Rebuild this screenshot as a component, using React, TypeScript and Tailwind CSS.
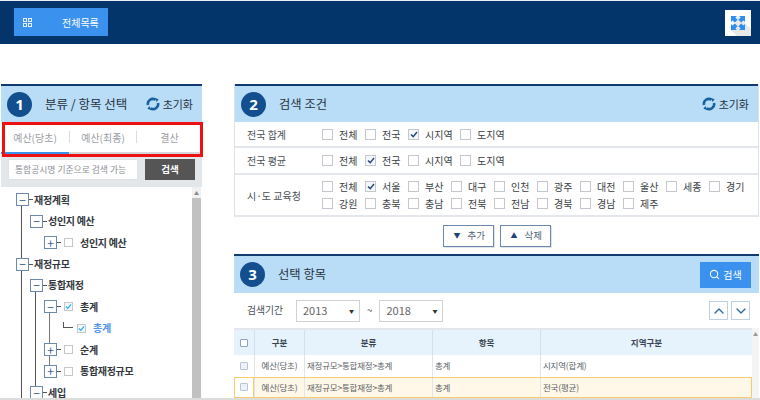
import React from "react";
import { ChevronDown, ChevronUp, Search } from "lucide-react";

const FONT = "[font-family:'Noto_Sans_CJK_KR','Noto_Sans',sans-serif]";

// Numbered circle used by every panel header
const StepBadge = ({ n }: { n: number }) => (
  <span className="flex h-[25px] w-[25px] shrink-0 items-center justify-center rounded-full bg-[#134f8f] text-[15px] font-bold text-white [font-family:'Open_Sans',sans-serif]">
    {n}
  </span>
);

const ResetIcon = () => (
  <svg width="14" height="14" viewBox="0 0 14 14" fill="none">
    <path d="M2 8a5 5 0 0 1 7.6-5.3" stroke="#16609f" strokeWidth="2.6" />
    <path d="M12 6a5 5 0 0 1-7.6 5.3" stroke="#16609f" strokeWidth="2.6" />
    <path d="M9 1 12.6 2.2 10.6 5Z" fill="#16609f" />
    <path d="M5 13 1.4 11.8 3.4 9Z" fill="#16609f" />
  </svg>
);

const ResetButton = () => (
  <span className="flex items-center gap-[3px] text-[11px] text-[#26323d]">
    <ResetIcon />
    초기화
  </span>
);

const Check = ({ on, size = 11, tick = "#23477a" }: { on?: boolean; size?: number; tick?: string }) => (
  <span
    className={`flex shrink-0 items-center justify-center border border-[#c4c7cc] ${on ? "bg-[#f3f6fa]" : "bg-white"}`}
    style={{ width: size, height: size }}
  >
    {on && (
      <svg width="8" height="7" viewBox="0 0 8 7" fill="none">
        <path d="M1 3.5 3.2 5.6 7 1" stroke={tick} strokeWidth="1.4" />
      </svg>
    )}
  </span>
);

const Option = ({ label, on, wide }: { label: string; on?: boolean; wide?: boolean }) => (
  <span className={`flex items-center text-[10px] text-[#3a3f45] ${wide ? "w-[52px]" : "w-[43px]"}`}>
    <Check on={on} />
    <span className="ml-[6px] whitespace-nowrap">{label}</span>
  </span>
);

const CondRow = ({ title, options, on, h }: { title: string; options: string[][]; on: string; h: string }) => (
  <div className={`flex items-center border-b-2 border-[#e3e6ea] ${h}`}>
    <span className="w-[87px] pl-[12px] text-[10px] text-[#4a4f55]">{title}</span>
    <div className="flex flex-col gap-[2px]">
      {options.map((line, i) => (
        <div key={i} className="flex">
          {line.map((o) => (
            <Option key={o} label={o} on={o === on} wide={o === "시지역"} />
          ))}
        </div>
      ))}
    </div>
  </div>
);

// Tree rows
interface TreeRow {
  level: number;
  label: string;
  sign?: "-" | "+";
  check?: boolean;
  on?: boolean;
  leaf?: boolean;
}

const treeRows: TreeRow[] = [
  { level: 0, label: "재정계획", sign: "-" },
  { level: 1, label: "성인지 예산", sign: "-" },
  { level: 2, label: "성인지 예산", sign: "+", check: true },
  { level: 0, label: "재정규모", sign: "-" },
  { level: 1, label: "통합재정", sign: "-" },
  { level: 2, label: "총계", sign: "-", check: true, on: true },
  { level: 3, label: "총계", check: true, on: true, leaf: true },
  { level: 2, label: "순계", sign: "+", check: true },
  { level: 2, label: "통합재정규모", sign: "+", check: true },
  { level: 1, label: "세입", sign: "-" },
];

const TreeItem = ({ row }: { row: TreeRow }) => (
  <div className="relative flex h-[21.44px] items-center" style={{ paddingLeft: 15 + Math.min(row.level, 2) * 14 }}>
    {row.sign && (
      <span className="relative z-10 flex h-[13px] w-[13px] items-center justify-center border border-[#6c88aa] bg-white text-[12px] leading-none text-[#3e5f86]">
        {row.sign === "-" ? "−" : "+"}
      </span>
    )}
    {row.sign && <span className="h-px w-[4px] bg-[#555]" />}
    {row.leaf && (
      <span className="ml-[19px] mr-[4px] h-[6px] w-[10px] -translate-y-[3px] border-b border-l border-[#555]" />
    )}
    {row.check && (
      <span className={row.leaf ? "" : "ml-[3px]"}>
        <Check on={row.on} size={9} tick="#2bb0ef" />
      </span>
    )}
    <span
      className={`whitespace-nowrap text-[10px] font-bold leading-none tracking-[-0.3px] ${row.check ? "ml-[7px]" : "ml-px"} ${row.leaf ? "text-[#4f95ea]" : "text-[#33373c]"}`}
    >
      {row.label}
    </span>
  </div>
);

const HeaderBar = ({ children, h }: { children: React.ReactNode; h: string }) => (
  <div className={`flex items-center border-t-2 border-[#123a70] bg-[#b9dcf7] ${h}`}>{children}</div>
);

const TableRow = ({ area, active }: { area: string; active?: boolean }) => (
  <div className={`flex h-[21.5px] text-[8.5px] tracking-[-0.2px] text-[#5a5f66] ${active ? "bg-[#fff8e8] outline -outline-offset-1 outline-[#f5cd6f]" : "bg-white"}`}>
    <span className={`flex w-[20px] items-center justify-center ${active ? "border-r border-[#f5cd6f] bg-white" : ""}`}>
      <span className="h-[8px] w-[8px] rounded-[1px] border border-[#b9c4d6] bg-[#eef2f8]" />
    </span>
    <span className="flex w-[50px] items-center justify-center border-l border-[#dde6ef]">예산(당초)</span>
    <span className="flex w-[128px] items-center border-l border-[#dde6ef] pl-[2px]">재정규모&gt;통합재정&gt;총계</span>
    <span className="flex w-[108px] items-center border-l border-[#dde6ef] pl-[2px]">총계</span>
    <span className="flex w-[212px] items-center border-l border-[#dde6ef] pl-[2px]">{area}</span>
  </div>
);

const YearSelect = ({ year }: { year: string }) => (
  <span className="flex h-[22px] w-[64px] items-center justify-between border border-[#cfd3d8] pl-[6px] pr-[5px] text-[11px] text-[#666]">
    {year}
    <span className="text-[5px] text-[#333]">▼</span>
  </span>
);

const MoveButton = ({ icon, label }: { icon: string; label: string }) => (
  <span className="flex h-[22px] w-[51px] items-center gap-[7px] border border-[#6c88aa] pl-[10px] shadow-[1px_1px_0_#dde3ea]">
    <span className="text-[7px] text-[#1f4576]">{icon}</span>
    {label}
  </span>
);

export default function App() {
  return (
    <div className={`relative h-[400px] w-[760px] overflow-hidden border-b-2 border-[#dcdcdc] bg-white ${FONT}`}>
      {/* Top bar */}
      <header className="flex h-[44px] items-start justify-between border-t border-[#e8eef4] bg-[#03356a] pl-[14px] pr-[9px] pt-[7px]">
        <div className="flex h-[28px] w-[94px] items-center bg-[#3b92ee] pl-[9px] text-[10px] text-white">
          <svg width="9" height="9" viewBox="0 0 9 9" fill="none" stroke="#e8f2ff" strokeWidth="1">
            <rect x="0.5" y="0.5" width="3" height="3" />
            <rect x="5.5" y="0.5" width="3" height="3" />
            <rect x="0.5" y="5.5" width="3" height="3" />
            <rect x="5.5" y="5.5" width="3" height="3" />
          </svg>
          <span className="ml-[30px]">전체목록</span>
        </div>
        <div className="mt-[2px] flex h-[26px] w-[26px] items-center justify-center bg-white">
          <svg width="26" height="26" viewBox="0 0 26 26" fill="#2d8df0">
            <path d="M6 20 13 6l13 13v7H12Z" fill="#e9e9e9" />
            <path d="M6 6h6L10.4 7.6 12.6 9.8 9.8 12.6 7.6 10.4 6 12Z" />
            <path d="M20 6v6l-1.6-1.6-2.2 2.2-2.8-2.8 2.2-2.2L14 6Z" />
            <path d="M6 20v-6l1.6 1.6 2.2-2.2 2.8 2.8-2.2 2.2L12 20Z" />
            <path d="M20 20h-6l1.6-1.6-2.2-2.2 2.8-2.8 2.2 2.2L20 14Z" />
          </svg>
        </div>
      </header>

      <main className="flex gap-[32px] pl-px pt-[40px]">
        {/* Left panel */}
        <section className="w-[201px] shrink-0">
          <HeaderBar h="h-[38px]">
            <span className="ml-[6px]"><StepBadge n={1} /></span>
            <span className="ml-[13px] text-[12.5px] text-[#26323d]">분류 / 항목 선택</span>
            <span className="ml-auto mr-[9px]"><ResetButton /></span>
          </HeaderBar>
          <div className="flex h-[32px] border-b-2 border-[#d3d7db] text-[10px] text-[#9a9ea3]">
            <span className="relative flex w-[68px] items-center justify-center">
              예산(당초)
              <span className="absolute -bottom-[2px] left-0 h-[2px] w-full bg-[#3b92ee]" />
            </span>
            <span className="my-[9px] w-px bg-[#d8dbde]" />
            <span className="flex w-[66px] items-center justify-center">예산(최종)</span>
            <span className="my-[9px] w-px bg-[#d8dbde]" />
            <span className="flex w-[65px] items-center justify-center">결산</span>
          </div>
          <div className="flex h-[33px] items-start gap-[7px] bg-[#e3e7ea] pl-[7px] pt-[5px]">
            <span className="flex h-[21px] w-[130px] items-center border border-[#dfe2e5] bg-white pl-[6px] text-[8.8px] text-[#8a8e93]">
              통합공시명 기준으로 검색 가능
            </span>
            <span className="flex h-[21px] w-[50px] items-center justify-center bg-[#555] text-[9.5px] font-bold text-white">
              검색
            </span>
          </div>
          <div className="relative flex">
            <div className="relative h-[211px] w-[191px] overflow-hidden pt-[2px]">
              {/* Tree guide lines */}
              <span className="absolute left-[20px] top-[12px] h-[200px] w-px bg-[#555]" />
              <span className="absolute left-[34px] top-[104px] h-[98px] w-px bg-[#555]" />
              <span className="absolute left-[48px] top-[125px] h-[60px] w-px bg-[#777]" />
              {treeRows.map((r, i) => (
                <TreeItem key={i} row={r} />
              ))}
            </div>
            <div className="flex h-[211px] w-[9px] flex-col bg-[#f1f1f1]">
              <span className="flex h-[11px] items-center justify-center text-[5px] text-[#888]">▲</span>
              <span className="flex-1 bg-[#c1c1c1]" />
            </div>
          </div>
        </section>

        {/* Right column */}
        <div className="w-[525px] shrink-0">
          <section className="border-x border-[#dfe3e8]">
            <HeaderBar h="h-[38px]">
              <span className="ml-[6px]"><StepBadge n={2} /></span>
              <span className="ml-[13px] text-[12.3px] text-[#26323d]">검색 조건</span>
              <span className="ml-auto mr-[9px]"><ResetButton /></span>
            </HeaderBar>
            <CondRow h="h-[26px]" title="전국 합계" on="시지역" options={[["전체", "전국", "시지역", "도지역"]]} />
            <CondRow h="h-[27px]" title="전국 평균" on="전국" options={[["전체", "전국", "시지역", "도지역"]]} />
            <CondRow
              h="h-[42px]"
              title="시·도 교육청"
              on="서울"
              options={[
                ["전체", "서울", "부산", "대구", "인천", "광주", "대전", "울산", "세종", "경기"],
                ["강원", "충북", "충남", "전북", "전남", "경북", "경남", "제주"],
              ]}
            />
          </section>

          <div className="flex h-[37px] items-center justify-center gap-[6px] text-[9.5px] text-[#4f5f75]">
            <MoveButton icon="▼" label="추가" />
            <MoveButton icon="▲" label="삭제" />
          </div>

          <section>
            <HeaderBar h="h-[39px]">
              <span className="ml-[6px]"><StepBadge n={3} /></span>
              <span className="ml-[13px] text-[12.3px] text-[#26323d]">선택 항목</span>
              <span className="ml-auto mr-[8px] flex h-[26px] w-[51px] items-center justify-center gap-[3px] bg-[#3b92ee] text-[10px] text-white">
                <Search size={11} strokeWidth={2.2} />검색
              </span>
            </HeaderBar>
            <div className="flex h-[35px] items-center pl-[13px] pr-[9px] text-[9.8px] text-[#4a4f55]">
              <span className="w-[49px]">검색기간</span>
              <YearSelect year="2013" />
              <span className="mx-[7px] text-[#555]">~</span>
              <YearSelect year="2018" />
              <span className="ml-auto flex gap-[3px]">
                <span className="flex h-[19px] w-[19px] items-center justify-center border border-[#bcd0e8] text-[#2c68ad]">
                  <ChevronUp size={16} />
                </span>
                <span className="flex h-[19px] w-[19px] items-center justify-center border border-[#bcd0e8] text-[#2c68ad]">
                  <ChevronDown size={16} />
                </span>
              </span>
            </div>
            <div className="flex">
              <div className="w-[518px]">
                <div className="flex h-[27px] border-t-2 border-[#e3e6ea] bg-[#e6f2fc] text-[8.5px] font-bold text-[#3a4552]">
                  <span className="flex w-[20px] items-center justify-center">
                    <span className="h-[8px] w-[8px] rounded-[1px] border border-[#8ea4c2] bg-white" />
                  </span>
                  <span className="flex w-[50px] items-center justify-center border-l border-[#d0e0ef]">구분</span>
                  <span className="flex w-[128px] items-center justify-center border-l border-[#d0e0ef]">분류</span>
                  <span className="flex w-[108px] items-center justify-center border-l border-[#d0e0ef]">항목</span>
                  <span className="flex w-[212px] items-center justify-center border-l border-[#d0e0ef]">지역구분</span>
                </div>
                <TableRow area="시지역(합계)" />
                <TableRow area="전국(평균)" active />
              </div>
              <div className="flex w-[7px] justify-center bg-[#f4f4f4] pt-[2px] text-[5px] text-[#999]">▲</div>
            </div>
          </section>
        </div>
      </main>

      {/* Annotation box over the tabs */}
      <div className="absolute left-[2px] top-[122px] h-[35px] w-[201px] border-[3px] border-[#ee1111]" />
    </div>
  );
}
